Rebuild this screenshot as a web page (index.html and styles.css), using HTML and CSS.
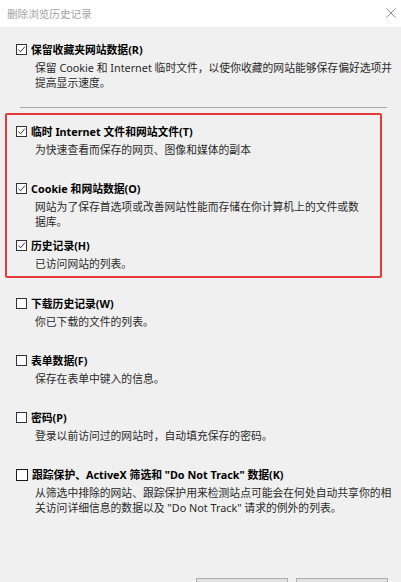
FILE: index.html
```html
<!DOCTYPE html>
<html lang="zh-CN">
<head>
<meta charset="utf-8">
<title>删除浏览历史记录</title>
<link rel="stylesheet" href="styles.css">
</head>
<body>
<div class="dialog">
  <div class="titlebar">
    <span class="title">删除浏览历史记录</span>
    <svg class="close" width="10" height="10" viewBox="0 0 10 10"><path d="M0.5 0.5 L9.5 9.5 M9.5 0.5 L0.5 9.5" stroke="#8a8a8a" stroke-width="1" fill="none"/></svg>
  </div>
  <div class="content">
    <div class="item">
      <div class="label-row">
        <span class="cb"><svg width="10" height="10" viewBox="0 0 10 10"><path d="M1.5 5 L4 7.6 L8.8 1.8" stroke="#222" stroke-width="1" fill="none"/></svg></span>
        <span class="label">保留收藏夹网站数据(R)</span>
      </div>
      <div class="desc">保留 Cookie 和 Internet 临时文件，以使你收藏的网站能够保存偏好选项并<br>提高显示速度。</div>
    </div>
    <div class="sep"></div>
    <div class="group">
      <div class="item">
        <div class="label-row">
          <span class="cb"><svg width="10" height="10" viewBox="0 0 10 10"><path d="M1.5 5 L4 7.6 L8.8 1.8" stroke="#222" stroke-width="1" fill="none"/></svg></span>
          <span class="label">临时 Internet 文件和网站文件(T)</span>
        </div>
        <div class="desc">为快速查看而保存的网页、图像和媒体的副本</div>
      </div>
      <div class="item">
        <div class="label-row">
          <span class="cb"><svg width="10" height="10" viewBox="0 0 10 10"><path d="M1.5 5 L4 7.6 L8.8 1.8" stroke="#222" stroke-width="1" fill="none"/></svg></span>
          <span class="label">Cookie 和网站数据(O)</span>
        </div>
        <div class="desc">网站为了保存首选项或改善网站性能而存储在你计算机上的文件或数<br>据库。</div>
      </div>
      <div class="item last">
        <div class="label-row">
          <span class="cb"><svg width="10" height="10" viewBox="0 0 10 10"><path d="M1.5 5 L4 7.6 L8.8 1.8" stroke="#222" stroke-width="1" fill="none"/></svg></span>
          <span class="label">历史记录(H)</span>
        </div>
        <div class="desc">已访问网站的列表。</div>
      </div>
    </div>
    <div class="item after-group">
      <div class="label-row">
        <span class="cb"></span>
        <span class="label">下载历史记录(W)</span>
      </div>
      <div class="desc">你已下载的文件的列表。</div>
    </div>
    <div class="item">
      <div class="label-row">
        <span class="cb"></span>
        <span class="label">表单数据(F)</span>
      </div>
      <div class="desc">保存在表单中键入的信息。</div>
    </div>
    <div class="item">
      <div class="label-row">
        <span class="cb"></span>
        <span class="label">密码(P)</span>
      </div>
      <div class="desc">登录以前访问过的网站时，自动填充保存的密码。</div>
    </div>
    <div class="item">
      <div class="label-row">
        <span class="cb dark"></span>
        <span class="label">跟踪保护、ActiveX 筛选和 "Do Not Track" 数据(K)</span>
      </div>
      <div class="desc">从筛选中排除的网站、跟踪保护用来检测站点可能会在何处自动共享你的相<br>关访问详细信息的数据以及 "Do Not Track" 请求的例外的列表。</div>
    </div>
  </div>
  <div class="footer">
    <button class="btn" aria-label="删除"></button>
    <button class="btn" aria-label="取消"></button>
  </div>
</div>
</body>
</html>
```

FILE: styles.css
```css
html, body {
  margin: 0;
  padding: 0;
  overflow: hidden;
}

body {
  background: #f0f0f0;
  font-family: "Noto Sans", "Noto Sans CJK SC", sans-serif;
  color: #111;
}

.dialog {
  width: 401px;
  height: 582px;
  overflow: hidden;
  background: #f0f0f0;
  display: flex;
  flex-direction: column;
}

.titlebar {
  height: 27px;
  flex: 0 0 27px;
  background: #ffffff;
  display: flex;
  align-items: center;
  justify-content: space-between;
  padding: 0 5px 0 7px;
  box-sizing: border-box;
}

.title {
  font-family: "Noto Sans CJK SC", sans-serif;
  font-size: 10.6px;
  color: #a3a3a3;
  line-height: 14px;
}

.close {
  display: block;
  margin-top: -1px;
}

.content {
  padding: 12px 0 0 16px;
}

.item {
  min-height: 57px;
}

.item.last {
  min-height: 0;
}

.item.after-group {
  margin-top: 15px;
}

.label-row {
  display: flex;
  align-items: center;
  height: 21px;
  gap: 4px;
}

.cb {
  width: 11px;
  height: 11px;
  box-sizing: border-box;
  border: 1px solid #333;
  background: #fff;
  display: flex;
  align-items: center;
  justify-content: center;
  flex: 0 0 11px;
}

.cb.dark {
  width: 12px;
  height: 12px;
  flex-basis: 12px;
  border-color: #1a1a1a;
}

.cb svg {
  display: block;
  width: 9px;
  height: 9px;
}

.label {
  font-size: 10.8px;
  font-weight: 700;
  line-height: 21px;
  color: #000;
  white-space: nowrap;
}

.desc {
  padding-left: 19px;
  font-size: 10.8px;
  line-height: 15px;
  color: #2a2a2a;
  white-space: nowrap;
}

.sep {
  width: 367px;
  height: 1px;
  margin: 11px 0 0 4px;
  background: #a9a9a9;
}

.group {
  width: 377px;
  box-sizing: border-box;
  margin: 5px 0 0 -11px;
  border: 2px solid #e53a3b;
  border-radius: 2px;
  padding: 6px 0 5px 9px;
}

.footer {
  display: flex;
  justify-content: flex-end;
  gap: 8px;
  padding-right: 13px;
  margin-top: 57px;
}

.btn {
  width: 92px;
  height: 23px;
  flex: 0 0 92px;
  background: #e1e1e1;
  border: 1px solid #adadad;
  border-radius: 0;
  padding: 0;
}
```
